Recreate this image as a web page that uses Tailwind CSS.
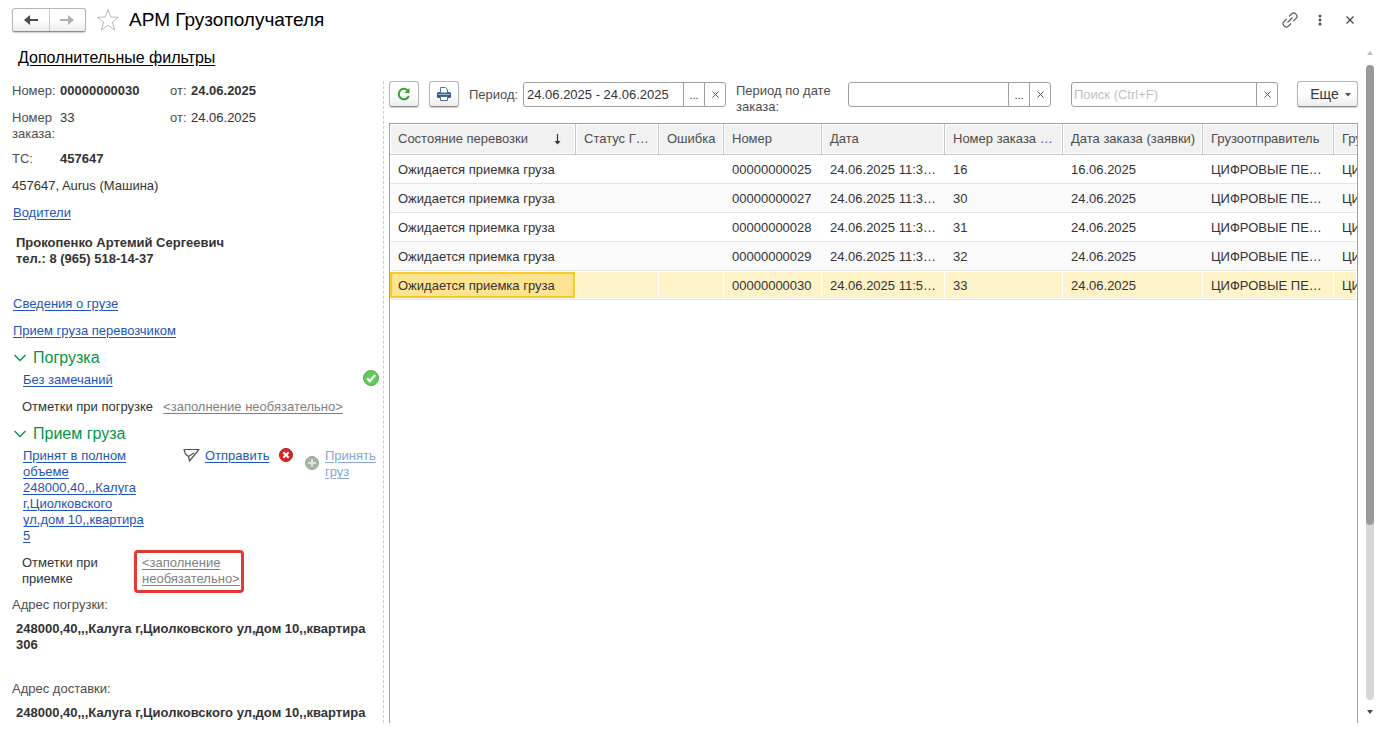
<!DOCTYPE html>
<html lang="ru">
<head>
    <meta charset="UTF-8">
    <meta name="viewport" content="width=device-width, initial-scale=1.0">
    <title>АРМ Грузополучателя</title>
    <script src="https://cdn.jsdelivr.net/npm/@tailwindcss/browser@4"></script>
</head>
<body class="flex flex-col h-screen overflow-hidden bg-white pb-[10px] font-['Liberation_Sans',Arial,sans-serif] text-[13px] leading-4 text-[#333]">

    <!-- Заголовок окна -->
    <header class="flex items-center h-10 shrink-0 pl-3 pr-[18px]">
        <div class="flex h-6 w-[74px] border border-[#b5b5b5] border-b-[#8c8c8c] rounded-[3px] bg-linear-to-b from-white from-50% to-[#ececec] shadow-[0_1px_1px_#ccc]">
            <button aria-label="Назад" class="flex-1 flex items-center justify-center border-r border-[#c8c8c8]">
                <svg width="14" height="12" viewBox="0 0 14 12"><path d="M0 6l6-5v4h8v2H6v4z" fill="#4d4d4d"/></svg>
            </button>
            <button aria-label="Вперед" class="flex-1 flex items-center justify-center">
                <svg width="14" height="12" viewBox="0 0 14 12"><path d="M14 6L8 1v4H0v2h8v4z" fill="#b0b0b0"/></svg>
            </button>
        </div>
        <button aria-label="В избранное" class="ml-[10px]">
            <svg width="24" height="24" viewBox="0 0 24 24"><path d="M12 1.5l2.700 7.600 8 .2-6.300 4.900 2.300 7.800L12 17.400 5.300 22l2.300-7.800L1.300 9.300l8-.2z" fill="#fff" stroke="#b4b9be" stroke-width="1"/></svg>
        </button>
        <h1 class="ml-[9px] text-[19px] leading-6 text-black">АРМ Грузополучателя</h1>
        <div class="ml-auto flex items-center gap-[15px]">
            <button aria-label="Ссылка">
                <svg width="16" height="16" viewBox="0 0 16 16" fill="none" stroke="#555" stroke-width="1.200"><path d="M5.500 10.500l5-5M7 4.500l2.600-2.600a2.600 2.600 0 0 1 4 0l.5.5a2.600 2.600 0 0 1 0 4L11.500 9M9 11.500l-2.600 2.600a2.600 2.600 0 0 1-4 0l-.5-.5a2.600 2.600 0 0 1 0-4L4.500 7"/></svg>
            </button>
            <button aria-label="Меню" class="w-[14px] flex justify-center">
                <svg width="4" height="12" viewBox="0 0 4 12" fill="#555"><circle cx="2" cy="2" r="1.500"/><circle cx="2" cy="6" r="1.500"/><circle cx="2" cy="10" r="1.500"/></svg>
            </button>
            <button aria-label="Закрыть" class="w-4 flex justify-center">
                <svg width="8" height="8" viewBox="0 0 8 8" stroke="#444" stroke-width="1.200"><path d="M.5.5l7 7M7.500.5l-7 7"/></svg>
            </button>
        </div>
    </header>

    <div class="flex flex-1 min-h-0">
        <div class="flex flex-col flex-1 min-w-0">
            <div class="h-[41px] shrink-0 pt-2 pl-[18px]">
                <a href="#" class="text-[16px] leading-5 text-black underline underline-offset-2">Дополнительные фильтры</a>
            </div>

            <main class="flex flex-1 min-h-0">
                <!-- Карточка перевозки -->
                <section class="w-[384px] shrink-0 overflow-hidden border-r border-dashed border-[#ccc] pt-[2px] pl-3">
                    <dl class="grid grid-cols-[48px_110px_21px_1fr]">
                        <dt class="text-[#4d4d4d]">Номер:</dt>
                        <dd class="font-bold">00000000030</dd>
                        <dt class="text-[#4d4d4d]">от:</dt>
                        <dd class="font-bold">24.06.2025</dd>
                        <dt class="mt-[11px] text-[#4d4d4d]">Номер заказа:</dt>
                        <dd class="mt-[11px]">33</dd>
                        <dt class="mt-[11px] text-[#4d4d4d]">от:</dt>
                        <dd class="mt-[11px]">24.06.2025</dd>
                        <dt class="mt-[9px] text-[#4d4d4d]">ТС:</dt>
                        <dd class="mt-[9px] font-bold">457647</dd>
                    </dl>
                    <p class="mt-[11px]">457647, Aurus (Машина)</p>
                    <p class="mt-[11px] pl-px"><a href="#" class="text-[#1d55b8] underline underline-offset-2">Водители</a></p>
                    <p class="mt-[14px] pl-1 font-bold">Прокопенко Артемий Сергеевич<br>тел.: 8 (965) 518-14-37</p>
                    <p class="mt-[29px] pl-px"><a href="#" class="text-[#1d55b8] underline underline-offset-2">Сведения о грузе</a></p>
                    <p class="mt-[11px] pl-px"><a href="#" class="text-[#1d55b8] underline underline-offset-2">Прием груза перевозчиком</a></p>

                    <h2 class="flex items-center mt-[9px] pl-[2px] gap-[7px] text-[16px] leading-5 text-[#009646]">
                        <svg width="12" height="8" viewBox="0 0 12 8" fill="none" stroke="#009646" stroke-width="1.400"><path d="M.5 1L6 6.500 11.500 1"/></svg>
                        Погрузка
                    </h2>
                    <div class="flex items-end justify-between h-4 mt-1 pl-[11px] pr-1">
                        <a href="#" class="text-[#1d55b8] underline underline-offset-2">Без замечаний</a>
                        <svg class="mb-[2px]" width="16" height="16" viewBox="0 0 16 16"><circle cx="8" cy="8" r="7.500" fill="#62cb5b" stroke="#55a84f"/><path d="M4 8.300l2.800 2.900L12.200 5" fill="none" stroke="#fff" stroke-width="2.200"/></svg>
                    </div>
                    <div class="flex mt-[11px] pl-[10px] gap-[10px]">
                        <span>Отметки при погрузке</span>
                        <a href="#" class="text-[#808080] underline underline-offset-2">&lt;заполнение необязательно&gt;</a>
                    </div>

                    <h2 class="flex items-center mt-[9px] pl-[2px] gap-[7px] text-[16px] leading-5 text-[#009646]">
                        <svg width="12" height="8" viewBox="0 0 12 8" fill="none" stroke="#009646" stroke-width="1.400"><path d="M.5 1L6 6.500 11.500 1"/></svg>
                        Прием груза
                    </h2>
                    <div class="flex items-start mt-1 pl-[11px]">
                        <div class="w-[160px] shrink-0">
                            <a href="#" class="block w-[124px] text-[#1d55b8] underline underline-offset-2">Принят в полном объеме 248000,40,,,Калуга г,Циолковского ул,дом 10,,квартира 5</a>
                        </div>
                        <a href="#" class="flex gap-[5px] w-[96px] shrink-0 text-[#1d55b8] underline underline-offset-2">
                            <svg class="shrink-0" width="17" height="14" viewBox="0 0 17 14" fill="none" stroke="#555" stroke-width="1.200" stroke-linejoin="round"><path d="M1 1.500h15L6.500 13 5.500 8.500 2.500 6zM5.500 8.500L11 5"/></svg>
                            Отправить
                        </a>
                        <svg class="shrink-0" width="14" height="14" viewBox="0 0 14 14"><circle cx="7" cy="7" r="6.500" fill="#dc2626" stroke="#b91c1c"/><path d="M4.300 4.300l5.400 5.400M9.700 4.300L4.300 9.700" stroke="#fff" stroke-width="2"/></svg>
                        <svg class="shrink-0 ml-3 mt-2" width="14" height="14" viewBox="0 0 14 14"><circle cx="7" cy="7" r="6.500" fill="#a4b5a6" stroke="#98a89a"/><path d="M7 3v8M3 7h8" stroke="#dde5dd" stroke-width="2"/></svg>
                        <a href="#" class="ml-[6px] text-[#86a5da] underline underline-offset-2">Принять груз</a>
                    </div>
                    <div class="flex items-start mt-[6px] pl-[10px]">
                        <span class="w-[112px] pt-[5px] pr-5">Отметки при приемке</span>
                        <a href="#" class="w-[110px] border-3 border-[#e23a30] rounded-[4px] pl-[5px] pt-[2px] pb-[3px] text-[#808080] underline underline-offset-2">&lt;заполнение необязательно&gt;</a>
                    </div>
                    <p class="mt-1 text-[#4d4d4d]">Адрес погрузки:</p>
                    <p class="mt-2 pl-1 font-bold">248000,40,,,Калуга г,Циолковского ул,дом 10,,квартира 306</p>
                    <p class="mt-7 text-[#4d4d4d]">Адрес доставки:</p>
                    <p class="mt-2 pl-1 font-bold">248000,40,,,Калуга г,Циолковского ул,дом 10,,квартира</p>
                </section>

                <!-- Список перевозок -->
                <section class="flex flex-col flex-1 min-w-0 pl-[5px] pr-[8px]">
                    <div class="flex items-start h-[42px] shrink-0">
                        <button aria-label="Обновить" class="flex items-center justify-center w-[30px] h-[26px] shrink-0 border border-[#b5b5b5] border-b-[#8c8c8c] rounded-[3px] bg-linear-to-b from-white from-50% to-[#ececec] shadow-[0_1px_1px_#ccc]">
                            <svg width="14" height="14" viewBox="0 0 14 14"><path d="M11.800 9A5.200 5.200 0 1 1 10.500 3.200" fill="none" stroke="#2fa52f" stroke-width="2"/><path d="M12.500 1v5H7.500z" fill="#2fa52f"/></svg>
                        </button>
                        <button aria-label="Печать" class="flex items-center justify-center ml-[10px] w-[30px] h-[26px] shrink-0 border border-[#b5b5b5] border-b-[#8c8c8c] rounded-[3px] bg-linear-to-b from-white from-50% to-[#ececec] shadow-[0_1px_1px_#ccc]">
                            <svg width="16" height="16" viewBox="0 0 16 16"><rect x="1" y="6" width="14" height="6" rx="1.500" fill="#335b83"/><path d="M4.500 7V1.500h5l2 2V7z" fill="#fff" stroke="#55708c"/><path d="M2 8.500h12" stroke="#9fb8cf"/><path d="M4.500 10.500h7v4h-7z" fill="#fff" stroke="#55708c"/></svg>
                        </button>
                        <label for="period" class="ml-[10px] mt-[6px] w-[54px] shrink-0 text-[#4d4d4d]">Период:</label>
                        <div class="flex w-[203px] h-[25px] mt-px shrink-0 border border-[#a0a0a0] rounded-[3px]">
                            <input id="period" type="text" value="24.06.2025 - 24.06.2025" class="flex-1 min-w-0 px-[3px] outline-none">
                            <button aria-label="Выбрать период" class="w-[21px] border-l border-[#a0a0a0] text-[11px]">...</button>
                            <button aria-label="Очистить период" class="w-[21px] border-l border-[#a0a0a0] flex items-center justify-center">
                                <svg width="7" height="7" viewBox="0 0 7 7" stroke="#555"><path d="M.5.5l6 6M6.500.5l-6 6"/></svg>
                            </button>
                        </div>
                        <label for="orderPeriod" class="ml-[10px] mt-[2px] w-[112px] pr-3 shrink-0 text-[#4d4d4d]">Период по дате заказа:</label>
                        <div class="flex w-[203px] h-[25px] mt-px shrink-0 border border-[#a0a0a0] rounded-[3px]">
                            <input id="orderPeriod" type="text" class="flex-1 min-w-0 px-[3px] outline-none">
                            <button aria-label="Выбрать период заказа" class="w-[21px] border-l border-[#a0a0a0] text-[11px]">...</button>
                            <button aria-label="Очистить период заказа" class="w-[21px] border-l border-[#a0a0a0] flex items-center justify-center">
                                <svg width="7" height="7" viewBox="0 0 7 7" stroke="#555"><path d="M.5.5l6 6M6.500.5l-6 6"/></svg>
                            </button>
                        </div>
                        <div class="flex w-[207px] h-[25px] mt-px ml-auto border border-[#a0a0a0] rounded-[3px]">
                            <input type="text" aria-label="Поиск" placeholder="Поиск (Ctrl+F)" class="flex-1 min-w-0 px-[2px] outline-none placeholder:text-[#bfbfbf]">
                            <button aria-label="Очистить поиск" class="w-[21px] border-l border-[#a0a0a0] flex items-center justify-center">
                                <svg width="7" height="7" viewBox="0 0 7 7" stroke="#555"><path d="M.5.5l6 6M6.500.5l-6 6"/></svg>
                            </button>
                        </div>
                        <button class="flex items-center justify-center gap-[6px] ml-[19px] pl-[6px] w-[61px] h-[26px] shrink-0 border border-[#b5b5b5] border-b-[#8c8c8c] rounded-[3px] bg-linear-to-b from-white from-50% to-[#ececec] shadow-[0_1px_1px_#ccc] text-[14px]">
                            Еще
                            <svg class="mt-[2px]" width="6" height="4" viewBox="0 0 6 4"><path d="M0 0h6L3 3.500z" fill="#4d4d4d"/></svg>
                        </button>
                    </div>

                    <div class="flex-1 min-h-0 overflow-hidden border border-b-0 border-[#a0a0a0]">
                        <table class="w-full table-fixed border-separate border-spacing-0 whitespace-nowrap [&_th]:h-[31px] [&_th]:border-r [&_th]:border-b [&_th]:border-[#c8c8c8] [&_th]:bg-[#f1f1f1] [&_th]:shadow-[inset_0_0_0_1px_#fff] [&_th]:pl-2 [&_th]:text-left [&_th]:font-normal [&_th]:text-[#4d4d4d] [&_th]:overflow-hidden [&_td]:h-[29px] [&_td]:border-b [&_td]:border-[#e4e4e4] [&_td]:pt-[2px] [&_td]:pl-2 [&_td]:overflow-hidden">
                            <colgroup>
                                <col class="w-[186px]">
                                <col class="w-[83px]">
                                <col class="w-[65px]">
                                <col class="w-[98px]">
                                <col class="w-[123px]">
                                <col class="w-[118px]">
                                <col class="w-[140px]">
                                <col class="w-[131px]">
                                <col>
                            </colgroup>
                            <thead>
                                <tr>
                                    <th>
                                        <div class="flex items-center justify-between pr-[14px]">
                                            Состояние перевозки
                                            <svg width="7" height="11" viewBox="0 0 7 11"><path d="M3.500 0v9" stroke="#333" stroke-width="1.200"/><path d="M.5 7h6l-3 3.500z" fill="#333"/></svg>
                                        </div>
                                    </th>
                                    <th>Статус Г…</th>
                                    <th>Ошибка</th>
                                    <th>Номер</th>
                                    <th>Дата</th>
                                    <th>Номер заказа …</th>
                                    <th>Дата заказа (заявки)</th>
                                    <th>Грузоотправитель</th>
                                    <th class="border-r-0!">Гру</th>
                                </tr>
                            </thead>
                            <tbody>
                                <tr>
                                    <td>Ожидается приемка груза</td><td></td><td></td>
                                    <td>00000000025</td><td>24.06.2025 11:3…</td><td>16</td><td>16.06.2025</td>
                                    <td>ЦИФРОВЫЕ ПЕ…</td><td>ЦИ</td>
                                </tr>
                                <tr class="bg-[#fafafa]">
                                    <td>Ожидается приемка груза</td><td></td><td></td>
                                    <td>00000000027</td><td>24.06.2025 11:3…</td><td>30</td><td>24.06.2025</td>
                                    <td>ЦИФРОВЫЕ ПЕ…</td><td>ЦИ</td>
                                </tr>
                                <tr>
                                    <td>Ожидается приемка груза</td><td></td><td></td>
                                    <td>00000000028</td><td>24.06.2025 11:3…</td><td>31</td><td>24.06.2025</td>
                                    <td>ЦИФРОВЫЕ ПЕ…</td><td>ЦИ</td>
                                </tr>
                                <tr class="bg-[#fafafa]">
                                    <td>Ожидается приемка груза</td><td></td><td></td>
                                    <td>00000000029</td><td>24.06.2025 11:3…</td><td>32</td><td>24.06.2025</td>
                                    <td>ЦИФРОВЫЕ ПЕ…</td><td>ЦИ</td>
                                </tr>
                                <tr class="bg-[#fdf2c8] [&_td]:shadow-[inset_0_1px_#fff,inset_0_-1px_#fff,inset_-1px_0_#fff]">
                                    <td class="p-0!">
                                        <div class="flex items-center h-[26px] mr-px pt-[2px] pl-[6px] border-2 border-[#fbc926] bg-[#fee491]">Ожидается приемка груза</div>
                                    </td><td></td><td></td>
                                    <td>00000000030</td><td>24.06.2025 11:5…</td><td>33</td><td>24.06.2025</td>
                                    <td>ЦИФРОВЫЕ ПЕ…</td><td>ЦИ</td>
                                </tr>
                            </tbody>
                        </table>
                    </div>
                </section>
            </main>
        </div>

        <!-- Полоса прокрутки -->
        <div class="flex flex-col items-center w-[8px] mr-[2px] shrink-0 pt-[11px] pb-[9px]">
            <svg width="6" height="4" viewBox="0 0 6 4"><path d="M0 4h6L3 0z" fill="#bdbdbd"/></svg>
            <div class="flex-1 w-full mt-[10px] mb-[10px] rounded-full bg-[#d6d6d6]">
                <div class="w-full h-[72.500%] rounded-full bg-[#999]"></div>
            </div>
            <svg width="6" height="4" viewBox="0 0 6 4"><path d="M0 0h6L3 4z" fill="#4d4d4d"/></svg>
        </div>
    </div>
</body>
</html>
